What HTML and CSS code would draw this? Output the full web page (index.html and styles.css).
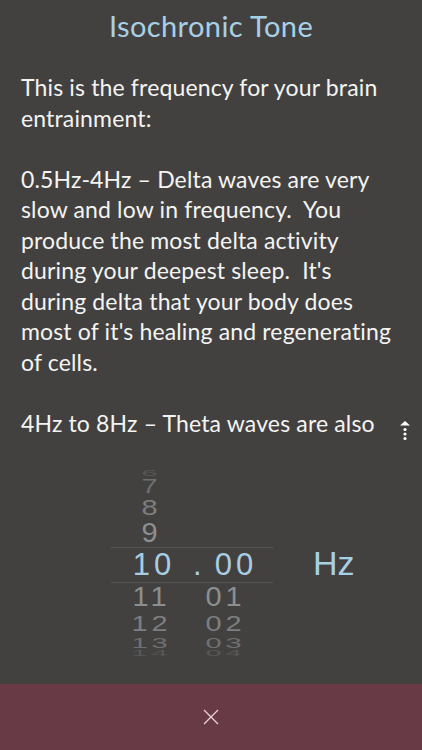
FILE: index.html
```html
<!DOCTYPE html>
<html lang="en">
<head>
    <meta charset="UTF-8">
    <title>Isochronic Tone</title>
    <link rel="stylesheet" href="styles.css">
</head>
<body>
    <div id="screen">
        <div id="tone-title">Isochronic Tone</div>
        <div id="tone-info">
            <p>This is the frequency for your brain entrainment:</p>
            <p>0.5Hz-4Hz – Delta waves are very slow and low in frequency.&nbsp; You produce the most delta activity during your deepest sleep.&nbsp; It's during delta that your body does most of it's healing and regenerating of cells.</p>
            <p>4Hz to 8Hz – Theta waves are also present in light sleep, while dreaming and in deep meditation.</p>
        </div>
        <svg id="scroll-hint" width="12" height="22" viewBox="0 0 12 22">
            <path d="M6 1 L11 5.5 L1 5.5 Z" fill="#fff"/>
            <circle cx="6" cy="9.5" r="1.6" fill="#fff"/>
            <circle cx="6" cy="14" r="1.6" fill="#fff"/>
            <circle cx="6" cy="18.5" r="1.6" fill="#fff"/>
        </svg>
        <div id="freq-picker">
            <div class="wheel">
                <div class="wheel-row r6"><span class="num">6</span><span class="dec"></span></div>
                <div class="wheel-row r7"><span class="num">7</span><span class="dec"></span></div>
                <div class="wheel-row r8"><span class="num">8</span><span class="dec"></span></div>
                <div class="wheel-row r9"><span class="num">9</span><span class="dec"></span></div>
                <div class="wheel-row selected"><span class="num">10</span><span class="dec"><span class="dot">.</span><span>00</span></span></div>
                <div class="wheel-row r9"><span class="num">11</span><span class="dec">01</span></div>
                <div class="wheel-row r12"><span class="num">12</span><span class="dec">02</span></div>
                <div class="wheel-row r13"><span class="num">13</span><span class="dec">03</span></div>
                <div class="wheel-row r14"><span class="num">14</span><span class="dec">04</span></div>
            </div>
            <div class="unit">Hz</div>
        </div>
        <div id="tone-footer">
            <button id="tone-close" title="Close">
                <svg width="16" height="16" viewBox="0 0 16 16">
                    <path d="M1 1 L15 15 M15 1 L1 15" stroke="#ecd3d9" stroke-width="1.3"/>
                </svg>
            </button>
        </div>
    </div>
</body>
</html>
```

FILE: styles.css
```css
body {
    margin: 0;
    background: #434140;
}
#screen {
    position: relative;
    height: 750px;
    display: flex;
    flex-direction: column;
    font-family: Lato, "Noto Sans", sans-serif;
}
#tone-title {
    padding-top: 8px;
    height: 36px;
    line-height: 36px;
    font-size: 29px;
    letter-spacing: 0.4px;
    color: #a8d0e5;
    text-align: center;
}
#tone-info {
    margin-top: 28px;
    padding: 0 26px 0 21px;
    height: 373px;
    overflow: hidden;
    color: #f4f4f2;
    font-size: 23px;
    letter-spacing: 0.15px;
    line-height: 30.5px;
}
#tone-info p {
    margin: 0 0 30.5px;
}
#scroll-hint {
    position: absolute;
    left: 399px;
    top: 420px;
}
#freq-picker {
    margin-top: 25px;
    display: flex;
    align-items: center;
    font-family: "Liberation Sans", Arial, sans-serif;
}
.wheel {
    margin-left: 111px;
    width: 162px;
    display: flex;
    flex-direction: column;
}
.wheel-row {
    display: flex;
    overflow: hidden;
    font-size: 29px;
    letter-spacing: 4px;
    color: #8b8f90;
}
.wheel-row span {
    display: block;
}
.num {
    width: 80px;
    padding-left: 4px;
    text-align: center;
}
.dec {
    width: 82px;
    padding-right: 10px;
    text-align: center;
}
.r6 { height: 6px; line-height: 6px; color: #555758; }
.r7 { height: 20px; line-height: 20px; color: #6d7071; }
.r8 { height: 23px; line-height: 23px; color: #7c7f80; }
.r9 { height: 28px; line-height: 28px; }
.r12 { height: 25px; line-height: 25px; color: #7c7f80; }
.r13 { height: 14px; line-height: 14px; color: #6d7071; }
.r14 { height: 6px; line-height: 6px; color: #555758; }
.r6 span { transform: scaleY(0.3); }
.r7 span { transform: scaleY(0.68); }
.r8 span { transform: scaleY(0.76); }
.r9 span { transform: scaleY(0.93); }
.r12 span { transform: scaleY(0.78); }
.r13 span { transform: scaleY(0.5); }
.r14 span { transform: scaleY(0.3); }
.wheel-row.selected {
    box-sizing: border-box;
    height: 36px;
    line-height: 34px;
    font-size: 31px;
    letter-spacing: 4px;
    color: #a8cde0;
    border-top: 1px solid #555352;
    border-bottom: 1px solid #555352;
}
.selected .dec {
    display: flex;
    padding: 0;
    text-align: left;
}
.selected .dot {
    margin-right: 9px;
}
.unit {
    margin-left: 40px;
    font-size: 34px;
    color: #a8d0e5;
}
#tone-footer {
    margin-top: auto;
    height: 66px;
    background: #673a45;
    display: flex;
    align-items: center;
    justify-content: center;
}
#tone-close {
    background: none;
    border: none;
    padding: 0;
    width: 16px;
    height: 16px;
    cursor: pointer;
}
#tone-close svg {
    display: block;
}
```
